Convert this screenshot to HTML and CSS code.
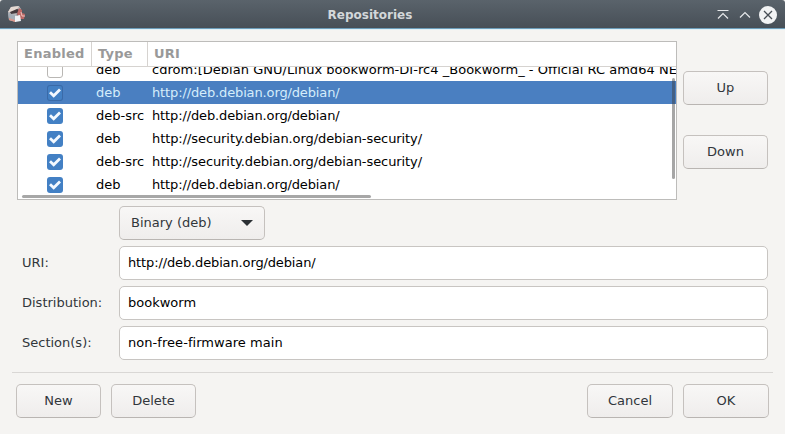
FILE: index.html
```
<!DOCTYPE html>
<html lang="en">
<head>
<meta charset="utf-8">
<title>Repositories</title>
<link rel="stylesheet" href="styles.css">
</head>
<body>
<svg width="0" height="0" class="defs">
  <symbol id="tick" viewBox="0 0 16 16"><path d="M3 7.3 6.7 10.8 13 4.6" fill="none" stroke="#f4f9ff" stroke-width="2.8"/></symbol>
</svg>
<div class="window">
  <header class="titlebar">
    <svg class="app-icon" viewBox="0 0 20 20">
      <path d="M1 8 4 3 12 2 14 5 10 8 9 18 2 16Z" fill="#b9b6b8"/>
      <path d="M1 8 4 3 12 2 10 5 5 8Z" fill="#e6dad3"/>
      <path d="M3 8 10 5 13 6 10 9 4 10Z" fill="#43393d"/>
      <path d="M1 9 8 11 8 17 2 16Z" fill="#a4adb6"/>
      <path d="M2 14 8 16V18L2 16Z" fill="#d8968b"/>
      <path d="M12 4 15 6 15 9 18 10 17 15 13 15 10 10Z" fill="#bd6966"/>
      <path d="M8 12 13 11 14 17 8 18Z" fill="#f0f2f5"/>
      <path d="M14 8 15 12 18 12" fill="none" stroke="#f0c2bd"/>
    </svg>
    <h1>Repositories</h1>
    <div class="controls">
      <svg class="ctl" viewBox="0 0 12 12"><path d="M.5 1.5H11.5M1 9.5 6 4.5 11 9.5" /></svg>
      <svg class="ctl" viewBox="0 0 12 12"><path d="M1 8.5 6 3.5 11 8.5" /></svg>
      <svg class="close" viewBox="0 0 18 18"><circle cx="9" cy="9" r="9"/><path d="M5 5 13 13M13 5 5 13"/></svg>
    </div>
  </header>
  <main>
    <section class="top">
      <div class="list">
        <div class="row head"><span>Enabled</span><span>Type</span><span>URI</span></div>
        <div class="rows">
          <div class="row"><i class="box empty"></i><span>deb</span><span class="cdrom">cdrom:[Debian GNU/Linux bookworm-DI-rc4 _Bookworm_ - Official RC amd64 NE</span></div>
          <div class="row selected"><i class="box"><svg><use href="#tick"/></svg></i><span>deb</span><span class="url">http://deb.debian.org/debian/</span></div>
          <div class="row"><i class="box"><svg><use href="#tick"/></svg></i><span>deb-src</span><span class="url">http://deb.debian.org/debian/</span></div>
          <div class="row"><i class="box"><svg><use href="#tick"/></svg></i><span>deb</span><span class="url long">http://security.debian.org/debian-security/</span></div>
          <div class="row"><i class="box"><svg><use href="#tick"/></svg></i><span>deb-src</span><span class="url long">http://security.debian.org/debian-security/</span></div>
          <div class="row"><i class="box"><svg><use href="#tick"/></svg></i><span>deb</span><span class="url">http://deb.debian.org/debian/</span></div>
        </div>
        <div class="vbar"></div>
        <div class="hbar"></div>
      </div>
      <div class="side"><button>Up</button><button>Down</button></div>
    </section>
    <section class="form">
      <span></span>
      <button class="combo">Binary (deb)<svg viewBox="0 0 12 6"><path d="M0 0H12L6 6Z"/></svg></button>
      <label for="uri">URI:</label><input id="uri" class="url" value="http://deb.debian.org/debian/">
      <label for="dist">Distribution:</label><input id="dist" value="bookworm">
      <label for="sect">Section(s):</label><input id="sect" class="sections" value="non-free-firmware main">
    </section>
    <hr>
    <footer><button>New</button><button>Delete</button><button class="push">Cancel</button><button>OK</button></footer>
  </main>
</div>
</body>
</html>
```
FILE: styles.css
```
* { box-sizing: border-box; }
body { margin: 0; background: #fff; }
.defs { position: absolute; }
.window {
  width: 785px; height: 434px; overflow: hidden;
  background: #f5f4f2;
  font: 13px "DejaVu Sans", sans-serif; color: #31363b;
}
.titlebar {
  display: grid; grid-template-columns: 78px 1fr 122px; align-items: center;
  height: 29px; padding: 0 8px 0 7px;
  background: linear-gradient(#5a636b, #474f57);
  border-bottom: 1px solid #6c9dba;
  border-radius: 3px 3px 0 0;
}
.app-icon { width: 20px; height: 20px; }
h1 { margin: 3px 0 0; font-size: 12px; font-weight: bold; text-align: center; color: #d3d7da; line-height: 15px; }
.controls { display: flex; justify-content: flex-end; align-items: center; gap: 10px; padding-top: 1px; }
.ctl { width: 12px; height: 12px; fill: none; stroke: #e6e8ea; stroke-width: 1.2; }
.close { width: 18px; height: 18px; margin-left: -2px; }
.close circle { fill: #f2f3f4; }
.close path { stroke: #474e55; stroke-width: 1.3; }
main { padding: 12px 12px 0; border-top: 1px solid #dff0f7; }
.top { display: flex; gap: 6px; padding: 0 5px; margin-top: -1px; }
.list {
  position: relative; width: 660px; height: 159px; overflow: hidden;
  background: #fff; border: 1px solid #bdbcba; color: #000;
}
.row { display: grid; grid-template-columns: 74px 56px 1fr; height: 23px; align-items: center; white-space: nowrap; }
.row > span { padding-left: 4px; }
.head { height: 25px; border-bottom: 1px solid #d6d3d0; font-weight: bold; color: #999; letter-spacing: .25px; }
.head > span { height: 24px; line-height: 24px; padding-left: 6px; border-right: 1px solid #d6d3d0; }
.head > span:last-child { border: 0; }
.rows { height: 132px; overflow: hidden; }
.rows .row:first-child { margin-top: -9px; }
.selected { background: #4a7fc1; color: #d5edfb; }
.url { letter-spacing: -.13px; }
.url.long { letter-spacing: -.08px; }
.cdrom { letter-spacing: .03px; }
.sections { letter-spacing: .05px; }
.box {
  display: block; width: 16px; height: 16px; justify-self: center;
  background: #4380c4; border-radius: 3px;
}
.selected .box { box-shadow: inset 0 0 0 1px #3a6aa8; }
.box.empty { background: #fff; border: 1px solid #b9b7b4; }
.box svg { display: block; width: 16px; height: 16px; }
.vbar { position: absolute; right: 1px; top: 36px; width: 3px; height: 101px; background: rgba(60, 60, 60, .46); border-radius: 2px; }
.hbar { position: absolute; left: 4px; bottom: 1px; width: 349px; height: 3px; background: #a7a7a7; border-radius: 2px; }
.side { display: flex; flex-direction: column; gap: 30px; padding-top: 30px; }
button {
  width: 85px; height: 34px; padding: 0 0 2px;
  font: inherit; color: #31363b;
  background: linear-gradient(#f8f7f6, #efedec);
  border: 1px solid #c5c1be; border-bottom-color: #b9b5b2; border-radius: 5px;
}
.form {
  display: grid; grid-template-columns: 97px 649px; grid-auto-rows: 34px; row-gap: 6px;
  align-items: center; margin-top: 6px; padding-left: 10px;
}
.combo { display: flex; width: 146px; align-items: center; justify-content: space-between; padding: 0 11px 2px; }
.combo svg { width: 12px; height: 6px; margin-top: 2px; fill: #2b3034; }
label { padding-bottom: 2px; }
input {
  width: 649px; height: 34px; padding: 0 8px 2px; font: inherit; color: #000;
  background: #fff; border: 1px solid #c8c5c2; border-radius: 5px;
}
hr { margin: 12px 0 11px; height: 1px; border: 0; background: #d9d7d5; }
footer { display: flex; gap: 10px; padding: 0 4px; }
.push { margin-left: auto; }
.push, .push + button { width: 86px; }
```
